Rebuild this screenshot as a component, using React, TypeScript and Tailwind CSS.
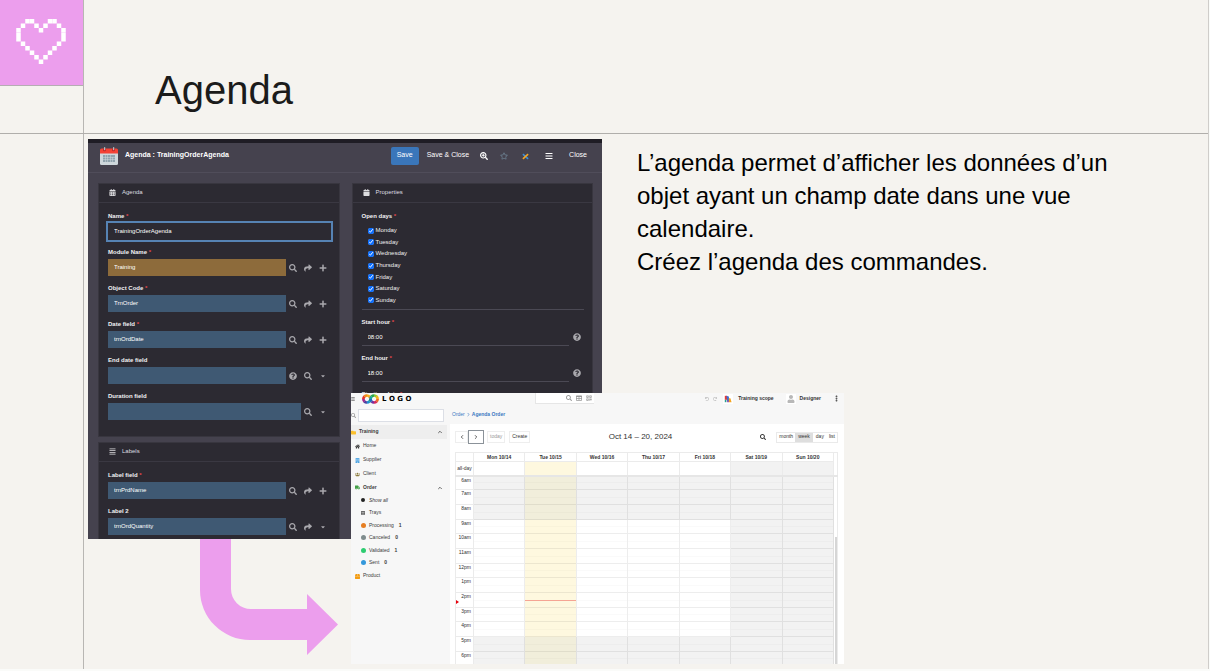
import type { ReactNode } from "react";
import {
  FaBars,
  FaBuilding,
  FaCalendar,
  FaCalendarAlt,
  FaCaretDown,
  FaHome,
  FaPlus,
  FaQuestionCircle,
  FaRegStar,
  FaSearch,
  FaSearchPlus,
  FaShare,
  FaTable,
  FaTruck,
  FaUser,
  FaUsers,
  FaFolder,
  FaBox,
  FaUndo,
  FaRedo,
  FaQrcode,
  FaAlignJustify,
} from "react-icons/fa";
import { ChevronLeft, ChevronRight, ChevronUp, EllipsisVertical } from "lucide-react";

/* ---------- Drawings ---------- */

const heartRows = [
  [2, 3, 7, 8],
  [1, 4, 6, 9],
  [0, 5, 10],
  [0, 10],
  [0, 10],
  [1, 9],
  [2, 8],
  [3, 7],
  [4, 6],
  [5],
];

function PixelHeart() {
  return (
    <svg viewBox="0 0 11 10" className="h-[45px] w-[50px]" fill="#fff" aria-hidden="true">
      {heartRows.map((cols, y) =>
        cols.map((x) => <rect key={`${x}-${y}`} x={x} y={y} width="1" height="1" />),
      )}
    </svg>
  );
}

function BentArrow() {
  return (
    <svg viewBox="0 0 138 116" className="ml-28 block h-[116px] w-[138px]" aria-hidden="true">
      <path
        d="M0 0H31V50A20 20 0 0 0 51 70H107V55L138 85.500L107 116V101H50A50 50 0 0 1 0 51Z"
        fill="#ec9eed"
      />
    </svg>
  );
}

function CalendarDrawing() {
  return (
    <svg viewBox="0 0 18 18" className="size-[18px]" aria-hidden="true">
      <path d="M0 4h18v12.500a1.500 1.500 0 0 1-1.500 1.500h-15A1.500 1.500 0 0 1 0 16.500Z" fill="#cfd8dc" />
      <path d="M1.500 1.500h15A1.500 1.500 0 0 1 18 3v3.500H0V3a1.500 1.500 0 0 1 1.500-1.500Z" fill="#f44336" />
      <circle cx="4.500" cy="3" r="1.300" fill="#b71c1c" />
      <circle cx="13.500" cy="3" r="1.300" fill="#b71c1c" />
      <rect x="4" y="0" width="1.200" height="3.200" rx=".5" fill="#b0bec5" />
      <rect x="13" y="0" width="1.200" height="3.200" rx=".5" fill="#b0bec5" />
      <path
        d="M3 8h2v2H3zM5.500 8h2v2h-2zM8 8h2v2H8zM10.500 8h2v2h-2zM13 8h2v2H8zM3 10.500h2v2H3zM5.500 10.500h2v2h-2zM8 10.500h2v2H8zM10.500 10.500h2v2h-2zM13 10.500h2v2h-2zM3 13h2v2H3zM5.500 13h2v2h-2zM8 13h2v2H8zM10.500 13h2v2h-2zM13 13h2v2h-2z"
        fill="#90a4ae"
      />
    </svg>
  );
}

function CrossTool() {
  return (
    <svg viewBox="0 0 8 8" className="size-[7px]" fill="none" strokeWidth="1.800" aria-hidden="true">
      <path d="M1 1.300L7 6.700" stroke="#3d8fd8" />
      <path d="M7 1.300L1 6.800" stroke="#f5a623" />
    </svg>
  );
}

function RainbowRings() {
  const left = ["#f6b21b", "#f08a1d", "#19a86b", "#1f8fd0", "#4a3fa0", "#a52a8c", "#e5352c", "#f08a1d"];
  const right = ["#9cc92b", "#f6b21b", "#ee6b22", "#d62a5e", "#7a2f9c", "#1f6fc0", "#19a8a0", "#2aa84a"];
  const ring = (cx: number, colors: string[]) =>
    colors.map((c, i) => {
      const a = (i * Math.PI) / 4 - Math.PI / 2;
      const b = a + Math.PI / 4 + 0.05;
      return (
        <path
          key={`${cx}-${i}`}
          d={`M${cx + 3.5 * Math.cos(a)} ${5 + 3.5 * Math.sin(a)}A3.5 3.5 0 0 1 ${cx + 3.5 * Math.cos(b)} ${5 + 3.5 * Math.sin(b)}`}
          stroke={c}
          strokeWidth="2.700"
          fill="none"
        />
      );
    });
  return (
    <svg viewBox="0 0 17 10" className="h-[10px] w-[17px]" aria-hidden="true">
      {ring(4.9, left)}
      {ring(12.1, right)}
    </svg>
  );
}

function ScopeDrawing() {
  return (
    <svg viewBox="0 0 10 10" className="size-2" aria-hidden="true">
      <path d="M1 1h3v5H1z" fill="#e53935" />
      <path d="M3 1l3 1 1 6H4z" fill="#3f6fd1" />
      <path d="M6 4l2 0 1.500 5H6z" fill="#f5a623" />
      <path d="M1 6h2v3H1z" fill="#2a9d8f" />
      <path d="M4 7h2v2H4z" fill="#8e44ad" />
    </svg>
  );
}

/* ---------- Object form ---------- */

type Tool = "search" | "go" | "add" | "help" | "more";

const tools: Record<Tool, { label: string; icon: ReactNode }> = {
  search: { label: "Search", icon: <FaSearch className="size-2" /> },
  go: { label: "Open", icon: <FaShare className="size-2" /> },
  add: { label: "Add", icon: <FaPlus className="size-2" /> },
  help: { label: "Help", icon: <FaQuestionCircle className="size-2" /> },
  more: { label: "More", icon: <FaCaretDown className="size-[6px]" /> },
};

function ToolButton({ tool }: { tool: Tool }) {
  return (
    <button type="button" aria-label={tools[tool].label} className="flex w-[15px] justify-center text-[#a9a8ad]">
      {tools[tool].icon}
    </button>
  );
}

function FieldLabel({ id, text, required }: { id?: string; text: string; required?: boolean }) {
  return (
    <label htmlFor={id} className="block h-3 text-[6px] leading-3 font-bold text-[#f1f1f3]">
      {text}
      {required && <span className="text-[#e5484d]"> *</span>}
    </label>
  );
}

function LinkField(props: {
  id: string;
  label: string;
  value?: string;
  required?: boolean;
  gold?: boolean;
  icons: Tool[];
}) {
  return (
    <div className="mb-[6px]">
      <FieldLabel id={props.id} text={props.label} required={props.required} />
      <div className="mt-px flex items-center">
        <input
          id={props.id}
          defaultValue={props.value}
          className={
            "h-[17px] min-w-0 flex-1 px-[6px] pb-px text-[6px] text-white outline-none " +
            (props.gold ? "bg-[#8d6b3b]" : "bg-[#3f5973]")
          }
        />
        {props.icons.map((t) => (
          <ToolButton key={t} tool={t} />
        ))}
      </div>
    </div>
  );
}

function Card({ icon, title, children }: { icon: ReactNode; title: string; children: ReactNode }) {
  return (
    <section className="border border-[#38363f] bg-[#2c2a32]">
      <h3 className="flex h-[19px] items-center gap-[6px] border-b border-[#3a3842] px-[10px] pb-[2px] text-[6px] text-[#dddde0]">
        {icon}
        {title}
      </h3>
      <div className="pt-[7px] pr-2 pl-[9px]">{children}</div>
    </section>
  );
}

const days = ["Monday", "Tuesday", "Wednesday", "Thursday", "Friday", "Saturday", "Sunday"];

function HourField({ id, label, value }: { id: string; label: string; value: string }) {
  return (
    <div className="mb-[6px]">
      <FieldLabel id={id} text={label} required />
      <div className="flex items-center">
        <input
          id={id}
          defaultValue={value}
          className="h-[18px] min-w-0 flex-1 border-b border-[#4b4954] px-[6px] text-[6px] text-white outline-none"
        />
        <ToolButton tool="help" />
      </div>
    </div>
  );
}

function FormWindow() {
  return (
    <div className="flex h-[400px] w-[514px] flex-col overflow-hidden border-t-4 border-[#1f1d25] bg-[#45424e]">
      <header className="flex h-[30px] shrink-0 items-center border-b border-[#504d5a] pr-[15px] pb-1 pl-3 text-[7px] text-white">
        <CalendarDrawing />
        <h2 className="ml-[7px] flex-1 font-bold">Agenda : TrainingOrderAgenda</h2>
        <button type="button" className="h-[18px] rounded-[2px] bg-[#3a76ba] px-[6px]">
          Save
        </button>
        <button type="button" className="ml-2">
          Save &amp; Close
        </button>
        <button type="button" aria-label="Zoom" className="ml-[11px]">
          <FaSearchPlus className="size-2" />
        </button>
        <button type="button" aria-label="Favorite" className="ml-3 text-[#6d8192]">
          <FaRegStar className="size-2" />
        </button>
        <button type="button" aria-label="Tools" className="ml-[14px] pt-[2px]">
          <CrossTool />
        </button>
        <button type="button" aria-label="Menu" className="ml-4">
          <FaBars className="size-2" />
        </button>
        <button type="button" className="ml-4">
          Close
        </button>
      </header>
      <div className="grid grid-cols-2 gap-3 pt-[10px] pr-[9px] pl-[10px]">
        <div className="flex flex-col gap-[6px]">
          <div className="h-[253px]">
            <Card icon={<FaCalendarAlt className="size-[7px]" />} title="Agenda">
              <div className="mb-[6px]">
                <FieldLabel id="name" text="Name" required />
                <input
                  id="name"
                  defaultValue="TrainingOrderAgenda"
                  className="mt-px block h-[17px] w-full px-[6px] pb-px text-[6px] text-white underline decoration-[#b3202b] decoration-dotted outline-2 outline-[#5683b4]"
                />
              </div>
              <LinkField id="module" label="Module Name" value="Training" required gold icons={["search", "go", "add"]} />
              <LinkField id="object" label="Object Code" value="TrnOrder" required icons={["search", "go", "add"]} />
              <LinkField id="date" label="Date field" value="trnOrdDate" required icons={["search", "go", "add"]} />
              <LinkField id="end" label="End date field" icons={["help", "search", "more"]} />
              <LinkField id="duration" label="Duration field" icons={["search", "more"]} />
              <div className="h-[10px]" />
            </Card>
          </div>
          <Card icon={<FaAlignJustify className="size-[7px]" />} title="Labels">
            <LinkField id="label1" label="Label field" value="trnPrdName" required icons={["search", "go", "add"]} />
            <LinkField id="label2" label="Label 2" value="trnOrdQuantity" icons={["search", "go", "more"]} />
          </Card>
        </div>
        <Card icon={<FaCalendar className="size-[7px]" />} title="Properties">
          <fieldset className="mb-[6px] border-b border-[#4b4954] pb-[3px]">
            <legend className="h-[15px] text-[6px] leading-3 font-bold text-[#f1f1f3]">
              Open days <span className="text-[#e5484d]">*</span>
            </legend>
            <div className="flex h-[81px] flex-col pl-[6px]">
              {days.map((d) => (
                <label key={d} className="flex flex-1 items-center gap-[2px] text-[6px] text-[#eeeef0]">
                  <input type="checkbox" defaultChecked className="size-[6px] accent-[#0d6efd]" />
                  {d}
                </label>
              ))}
            </div>
          </fieldset>
          <HourField id="start" label="Start hour" value="08:00" />
          <HourField id="finish" label="End hour" value="18:00" />
          <HourField id="first" label="Starting date" value="" />
        </Card>
      </div>
    </div>
  );
}

/* ---------- Calendar window ---------- */

const statuses = [
  { label: "Processing", color: "bg-[#e67e22]", count: 1 },
  { label: "Canceled", color: "bg-[#7f8c8d]", count: 0 },
  { label: "Validated", color: "bg-[#2ecc71]", count: 1 },
  { label: "Sent", color: "bg-[#3498db]", count: 0 },
];

const menuRow = "flex h-[14px] items-center gap-[3px] px-1";

function Sidebar() {
  return (
    <nav className="w-[99px] shrink-0 pr-[3px] text-[5px] text-[#3b3b3b]">
      <div className="flex h-[21px] items-center gap-[2px] pt-[2px] pr-[3px]">
        <FaSearch className="size-[5px] text-[#999]" />
        <input aria-label="Search menu" className="h-[13px] min-w-0 flex-1 border border-[#dcdfe6] bg-white" />
      </div>
      <a href="#training" className="flex h-[14px] items-center gap-[3px] bg-[#eeeeee] pr-1 font-bold">
        <FaFolder className="size-[5px] text-[#fbc02d]" />
        <span className="flex-1">Training</span>
        <ChevronUp className="size-[6px]" strokeWidth={3} />
      </a>
      <a href="#home" className={menuRow}>
        <FaHome className="size-[5px]" />
        Home
      </a>
      <a href="#supplier" className={menuRow}>
        <FaBuilding className="size-[5px] text-[#4ba3e3]" />
        Supplier
      </a>
      <a href="#client" className={menuRow}>
        <FaUsers className="size-[5px] text-[#8a7a3a]" />
        Client
      </a>
      <a href="#order" className="flex h-[13px] items-center gap-[3px] px-1 font-bold">
        <FaTruck className="size-[5px] text-[#43a047]" />
        <span className="flex-1">Order</span>
        <ChevronUp className="size-[6px]" strokeWidth={3} />
      </a>
      <div className="flex h-[75px] flex-col pl-[10px]">
        <a href="#all" className="flex flex-1 items-center gap-1 italic">
          <span className="size-1 rounded-full bg-[#222]" />
          Show all
        </a>
        <a href="#trays" className="flex flex-1 items-center gap-1">
          <FaTable className="size-1" />
          Trays
        </a>
        {statuses.map((s) => (
          <a key={s.label} href={"#" + s.label} className="flex flex-1 items-center gap-[3px]">
            <span className={"size-[5px] rounded-full " + s.color} />
            {s.label}
            <span className="ml-[2px] font-bold">{s.count}</span>
          </a>
        ))}
      </div>
      <a href="#product" className={menuRow}>
        <FaBox className="size-[5px] text-[#f39c12]" />
        Product
      </a>
    </nav>
  );
}

const headings = ["Mon 10/14", "Tue 10/15", "Wed 10/16", "Thu 10/17", "Fri 10/18", "Sat 10/19", "Sun 10/20"];
const hours = ["6am", "7am", "8am", "9am", "10am", "11am", "12pm", "1pm", "2pm", "3pm", "4pm", "5pm", "6pm"];

function cellColor(day: number, hour: number) {
  const closed = hour < 3 || hour > 10;
  if (day === 1) return closed ? "bg-[#f1eedb]" : "bg-[#fef8df]";
  return closed || day > 4 ? "bg-[#f2f2f2]" : "bg-white";
}

function WeekTable() {
  return (
    <table className="w-full table-fixed border-collapse border border-[#ebebeb] text-[5px] leading-[7px] text-[#333]">
      <colgroup>
        <col className="w-[18px]" />
        {headings.map((h) => (
          <col key={h} />
        ))}
        <col className="w-1" />
      </colgroup>
      <thead>
        <tr className="h-[9px]">
          <th className="border border-[#ebebeb]" />
          {headings.map((h) => (
            <th key={h} className="border border-[#ebebeb] font-bold">
              {h}
            </th>
          ))}
          <th />
        </tr>
      </thead>
      <tbody>
        <tr className="h-[14px] border-b-2 border-[#e6e6e6]">
          <td className="border-r border-[#ebebeb] text-center whitespace-nowrap">all-day</td>
          {headings.map((h, d) => (
            <td
              key={h}
              className={
                "border-r border-[#ebebeb] " + (d === 1 ? "bg-[#fef8df]" : d > 4 ? "bg-[#f2f2f2]" : "bg-white")
              }
            />
          ))}
          <td />
        </tr>
        {hours.map((label, r) => (
          <tr key={label} className={r % 3 === 0 ? "h-[14px]" : "h-[15px]"}>
            <td className="relative border-t border-r border-[#ebebeb] pr-[2px] text-right align-top">
              {label}
              {label === "2pm" && (
                <span className="absolute top-[7px] left-0 border-y-2 border-l-[3px] border-y-transparent border-l-red-600" />
              )}
            </td>
            {headings.map((h, d) => (
              <td key={h} className={"border-t border-r border-[#000000]/7 p-0 " + cellColor(d, r)}>
                <div
                  className={
                    label === "2pm" && d === 1 ? "h-px bg-[#f5a493]" : "h-px bg-[#000000]/2"
                  }
                />
              </td>
            ))}
            {r === 0 && (
              <td rowSpan={13} className="p-0 align-bottom">
                <div className="mx-auto h-32 w-[2px] bg-[#d6d6d6]" />
              </td>
            )}
          </tr>
        ))}
      </tbody>
    </table>
  );
}

function CalendarWindow() {
  return (
    <div className="flex h-[271px] w-[493px] flex-col overflow-hidden bg-[#f7f7f7] text-[5px] text-[#333]">
      <header className="flex h-[11px] shrink-0 items-center pr-1">
        <FaBars className="size-1" />
        <span className="ml-[7px] flex items-center gap-[3px]">
          <RainbowRings />
          <span className="font-['DejaVu_Sans',sans-serif] text-[7px] leading-[10px] font-black whitespace-nowrap text-black">
            L O G O
          </span>
        </span>
        <div className="flex flex-1 justify-center pl-3">
          <label className="flex h-[11px] w-[59px] items-center gap-1 border-b border-l border-[#e6e6e6] bg-white pr-[2px] text-[#999]">
            <input aria-label="Search" className="min-w-0 flex-1" />
            <FaSearch className="size-[6px]" />
            <FaTable className="size-[6px]" />
            <FaQrcode className="size-[6px]" />
          </label>
        </div>
        <FaUndo className="size-1 text-[#bbb]" />
        <FaRedo className="ml-1 size-1 text-[#bbb]" />
        <button type="button" className="ml-[6px] flex items-center gap-[5px] font-bold">
          <span className="bg-white p-px">
            <ScopeDrawing />
          </span>
          Training scope
        </button>
        <button type="button" className="ml-3 flex items-center gap-1 font-bold">
          <span className="bg-white p-px">
            <FaUser className="size-2 text-[#b8b8b8]" />
          </span>
          Designer
        </button>
        <button type="button" aria-label="More" className="ml-3">
          <EllipsisVertical className="size-[7px]" strokeWidth={4} />
        </button>
      </header>
      <div className="flex min-h-0 flex-1">
        <Sidebar />
        <div className="flex min-w-0 flex-1 flex-col">
          <p className="flex h-5 shrink-0 items-center gap-px pt-px pl-[2px] text-[#3a78c2]">
            <a href="#order">Order</a>
            <ChevronRight className="size-[5px]" strokeWidth={3} />
            <a href="#agenda" className="font-bold">
              Agenda Order
            </a>
          </p>
          <main className="flex-1 bg-white pr-[6px] pl-[5px]">
            <div className="flex h-7 items-center pb-[2px]">
              <div className="flex flex-1 items-center">
                <button type="button" aria-label="Previous" className="flex h-3 w-[13px] items-center justify-center border border-[#eee]">
                  <ChevronLeft className="size-[6px]" strokeWidth={3} />
                </button>
                <button type="button" aria-label="Next" className="flex h-[14px] w-4 items-center justify-center border border-[#8b9299]">
                  <ChevronRight className="size-[6px]" strokeWidth={3} />
                </button>
                <button type="button" className="ml-[3px] h-3 border border-[#eee] px-[2px] text-[#999]">
                  today
                </button>
                <button type="button" className="ml-1 h-3 border border-[#eee] px-[2px]">
                  Create
                </button>
              </div>
              <h2 className="mr-3 text-[8px]">Oct 14 – 20, 2024</h2>
              <div className="flex flex-1 items-center justify-end">
                <button type="button" aria-label="Search" className="mr-[10px]">
                  <FaSearch className="size-[6px]" />
                </button>
                <div className="flex h-[11px] border border-[#eaeaea]">
                  <button type="button" className="px-[2px]">
                    month
                  </button>
                  <button type="button" className="bg-[#dedede] px-[3px]">
                    week
                  </button>
                  <button type="button" className="px-[3px]">
                    day
                  </button>
                  <button type="button" className="px-[2px]">
                    list
                  </button>
                </div>
              </div>
            </div>
            <WeekTable />
          </main>
        </div>
      </div>
    </div>
  );
}

/* ---------- Slide ---------- */

export default function App() {
  return (
    <div className="flex min-h-screen flex-col overflow-hidden bg-[#fafbf9] pr-px pb-[2px] font-['Liberation_Sans',Arial,sans-serif] text-[#1b1b1b]">
      <div className="flex flex-1 flex-col border-r border-[#cfcdca] bg-[#f5f3ef]">
        <header className="flex h-[134px] border-b border-[#b0aeab]">
          <div className="w-[84px] shrink-0 border-r border-[#b8b6b3]">
            <div className="flex h-[86px] items-center justify-center border-b border-[#b5adb3] bg-[#ec9eed] pr-[2px] pb-[2px]">
              <PixelHeart />
            </div>
          </div>
          <h1 className="pt-[70px] pl-[71px] text-[40px] leading-10">Agenda</h1>
        </header>
        <div className="flex flex-1">
          <div className="w-[84px] shrink-0 border-r border-[#b8b6b3]" />
          <div className="flex flex-1 pt-[5px] pl-1">
            <div className="relative shrink-0">
              <FormWindow />
              <BentArrow />
              <div className="absolute top-[254px] left-[263px]">
                <CalendarWindow />
              </div>
            </div>
            <div className="min-w-0 flex-1 pt-[7px] pr-12 pl-[35px] text-[24px] leading-[33px] text-black">
              <p>L’agenda permet d’afficher les données d’un objet ayant un champ date dans une vue calendaire.</p>
              <p>Créez l’agenda des commandes.</p>
            </div>
          </div>
        </div>
      </div>
    </div>
  );
}
